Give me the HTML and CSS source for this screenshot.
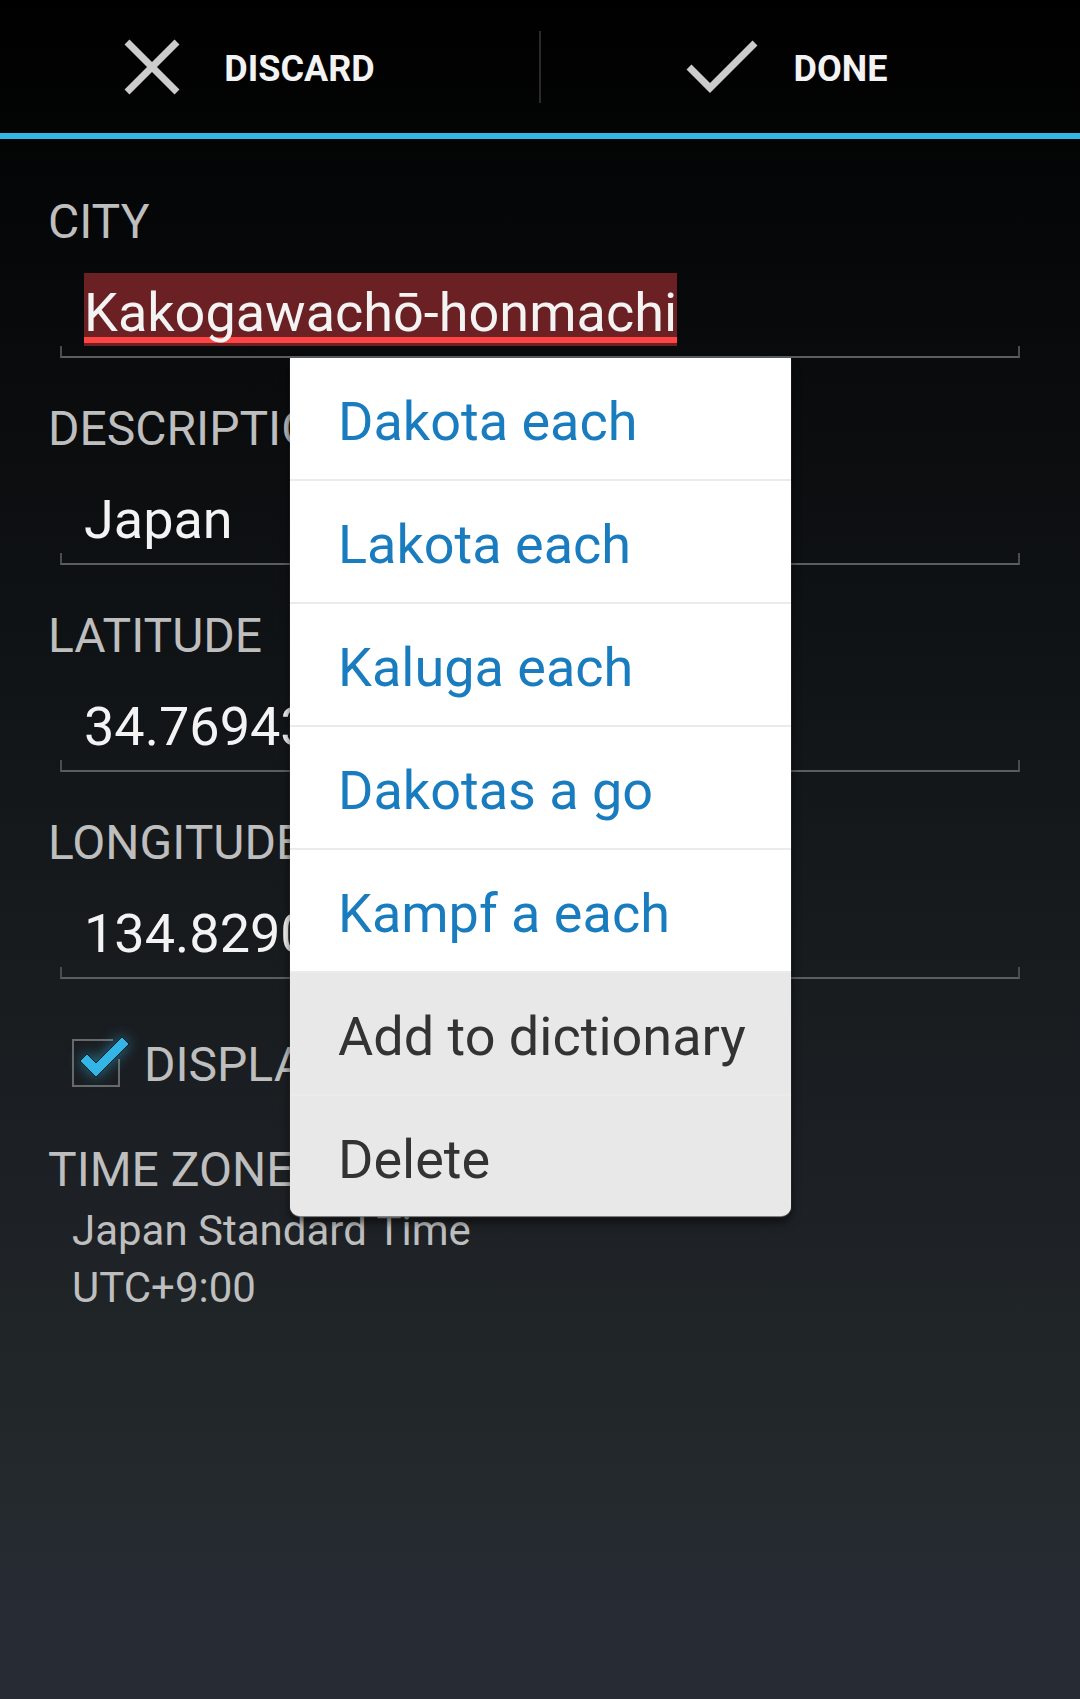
FILE: index.html
```html
<!DOCTYPE html>
<html lang="en">
<head>
<meta charset="utf-8">
<meta name="viewport" content="width=device-width, initial-scale=1">
<title>Edit city</title>
<link rel="stylesheet" href="styles.css">
</head>
<body>
<header class="action-bar">
  <button class="action" type="button">
    <svg class="action-icon" viewBox="0 0 96 96" aria-hidden="true"><path d="M23 23 73 73M73 23 23 73"/></svg>
    <span class="action-text">Discard</span>
  </button>
  <span class="divider"></span>
  <button class="action" type="button">
    <svg class="action-icon" viewBox="0 0 96 96" aria-hidden="true"><path d="M15 48 36 69 81 24"/></svg>
    <span class="action-text">Done</span>
  </button>
</header>

<main class="form">
  <div class="field">
    <label class="label" for="city">CITY</label>
    <div class="box">
      <input class="value misspelled" id="city" type="text" value="Kakogawachō-honmachi" spellcheck="false">
      <div class="suggestions">
        <button class="suggestion" type="button">Dakota each</button>
        <button class="suggestion" type="button">Lakota each</button>
        <button class="suggestion" type="button">Kaluga each</button>
        <button class="suggestion" type="button">Dakotas a go</button>
        <button class="suggestion" type="button">Kampf a each</button>
        <button class="suggestion command" type="button">Add to dictionary</button>
        <button class="suggestion command" type="button">Delete</button>
      </div>
    </div>
  </div>
  <div class="field">
    <label class="label" for="description">DESCRIPTION</label>
    <div class="box"><input class="value" id="description" type="text" value="Japan"></div>
  </div>
  <div class="field">
    <label class="label" for="latitude">LATITUDE</label>
    <div class="box"><input class="value" id="latitude" type="text" value="34.76943"></div>
  </div>
  <div class="field">
    <label class="label" for="longitude">LONGITUDE</label>
    <div class="box"><input class="value" id="longitude" type="text" value="134.8290"></div>
  </div>

  <div class="check-row">
    <span class="check">
      <input class="check-input" id="display" type="checkbox" checked>
      <svg class="check-art" viewBox="0 0 72 56" aria-hidden="true">
        <path class="check-frame" d="M41 3H1V49H47V22"/>
        <path class="check-mark" d="M8 24 15 17 24 26 50 0 57 7 24 40Z"/>
      </svg>
    </span>
    <label class="label" for="display">DISPLAY</label>
  </div>

  <section class="zone">
    <h2 class="label">TIME ZONE</h2>
    <p class="zone-line">Japan Standard Time</p>
    <p class="zone-line">UTC+9:00</p>
  </section>
</main>
</body>
</html>
```

FILE: styles.css
```css
*, *::after { box-sizing: border-box; }

html { min-height: 100%; background: linear-gradient(#000000, #14181b 48%, #1e2226 73%, #22282a 84%, #272b34 95%, #272b34); }

body {
  margin: 0;
  font-family: Roboto, sans-serif;
  color: #f3f3f3;
}

button, input { font: inherit; color: inherit; border: 0; padding: 0; background: none; }

/* Top bar */
.action-bar {
  display: flex;
  align-items: center;
  height: 139px;
  border-bottom: 6px solid #33b5e5;
}
.action {
  flex: 1;
  display: flex;
  align-items: center;
  justify-content: center;
  gap: 24px;
  height: 100%;
  padding-right: 60px;
  font-size: 36px;
  font-weight: 700;
  text-transform: uppercase;
}
.action-text { padding-top: 4px; }
.action-icon { width: 96px; height: 96px; fill: none; stroke: #cccccc; stroke-width: 7; }
.divider { width: 2px; height: 72px; background: #2a2a2a; }

/* Form */
.form { padding: 55px 48px 48px; }
.field { margin-bottom: 43px; }
.label {
  display: block;
  margin: 0;
  font-size: 48px;
  line-height: 56px;
  font-weight: 400;
  color: #bebebe;
}
.box {
  position: relative;
  margin: 23px 12px 0;
  padding: 0 24px 12px;
}
.box::after {
  content: "";
  position: absolute;
  inset: auto 0 0;
  height: 12px;
  border: 2px solid #4a4c4e;
  border-top: 0;
  border-bottom-color: #5b5d5f;
}
.value {
  display: block;
  width: 100%;
  height: 73px;
  padding-top: 5px;
  font-size: 54px;
  outline: 0;
}
.misspelled {
  width: auto;
  field-sizing: content;
  background: linear-gradient(#ff4444, #ff4444) 0 64px / 100% 6px no-repeat #6b2123;
}

/* Spelling suggestions */
.suggestions {
  position: absolute;
  top: 100%;
  left: 230px;
  z-index: 1;
  display: flex;
  flex-direction: column;
  width: 501px;
  border-radius: 0 0 10px 10px;
  overflow: hidden;
  background: #e8e8e8;
  box-shadow: 0 1px 1px #8a8a8a, 0 6px 10px rgba(0, 0, 0, 0.6);
}
.suggestion {
  height: 123px;
  padding: 6px 48px 0;
  border-bottom: 2px solid #ebebeb;
  background: #ffffff;
  font-size: 54px;
  text-align: left;
  white-space: nowrap;
  color: #197cbf;
}
.command { background: #e8e8e8; color: #333333; }
.suggestion:last-child { height: 120px; border-bottom: 0; }

/* Check box row */
.check-row {
  display: flex;
  align-items: center;
  margin: 58px 0 49px;
  padding-left: 24px;
}
.check { display: grid; width: 72px; height: 56px; }
.check-input { grid-area: 1 / 1; appearance: none; margin: 0; width: 48px; height: 48px; }
.check-art { grid-area: 1 / 1; width: 72px; height: 56px; overflow: visible; pointer-events: none; }
.check-frame { fill: none; stroke: #68696b; stroke-width: 2; }
.check-mark {
  fill: #33b5e5;
  stroke: #10202a;
  stroke-width: 1;
  filter: drop-shadow(0 0 7px rgba(51, 181, 229, 0.6));
}

/* Time zone */
.zone-line {
  margin: 0;
  padding-left: 24px;
  font-size: 42px;
  line-height: 57px;
  color: #bebebe;
}
.label + .zone-line { margin-top: 4px; }
```
